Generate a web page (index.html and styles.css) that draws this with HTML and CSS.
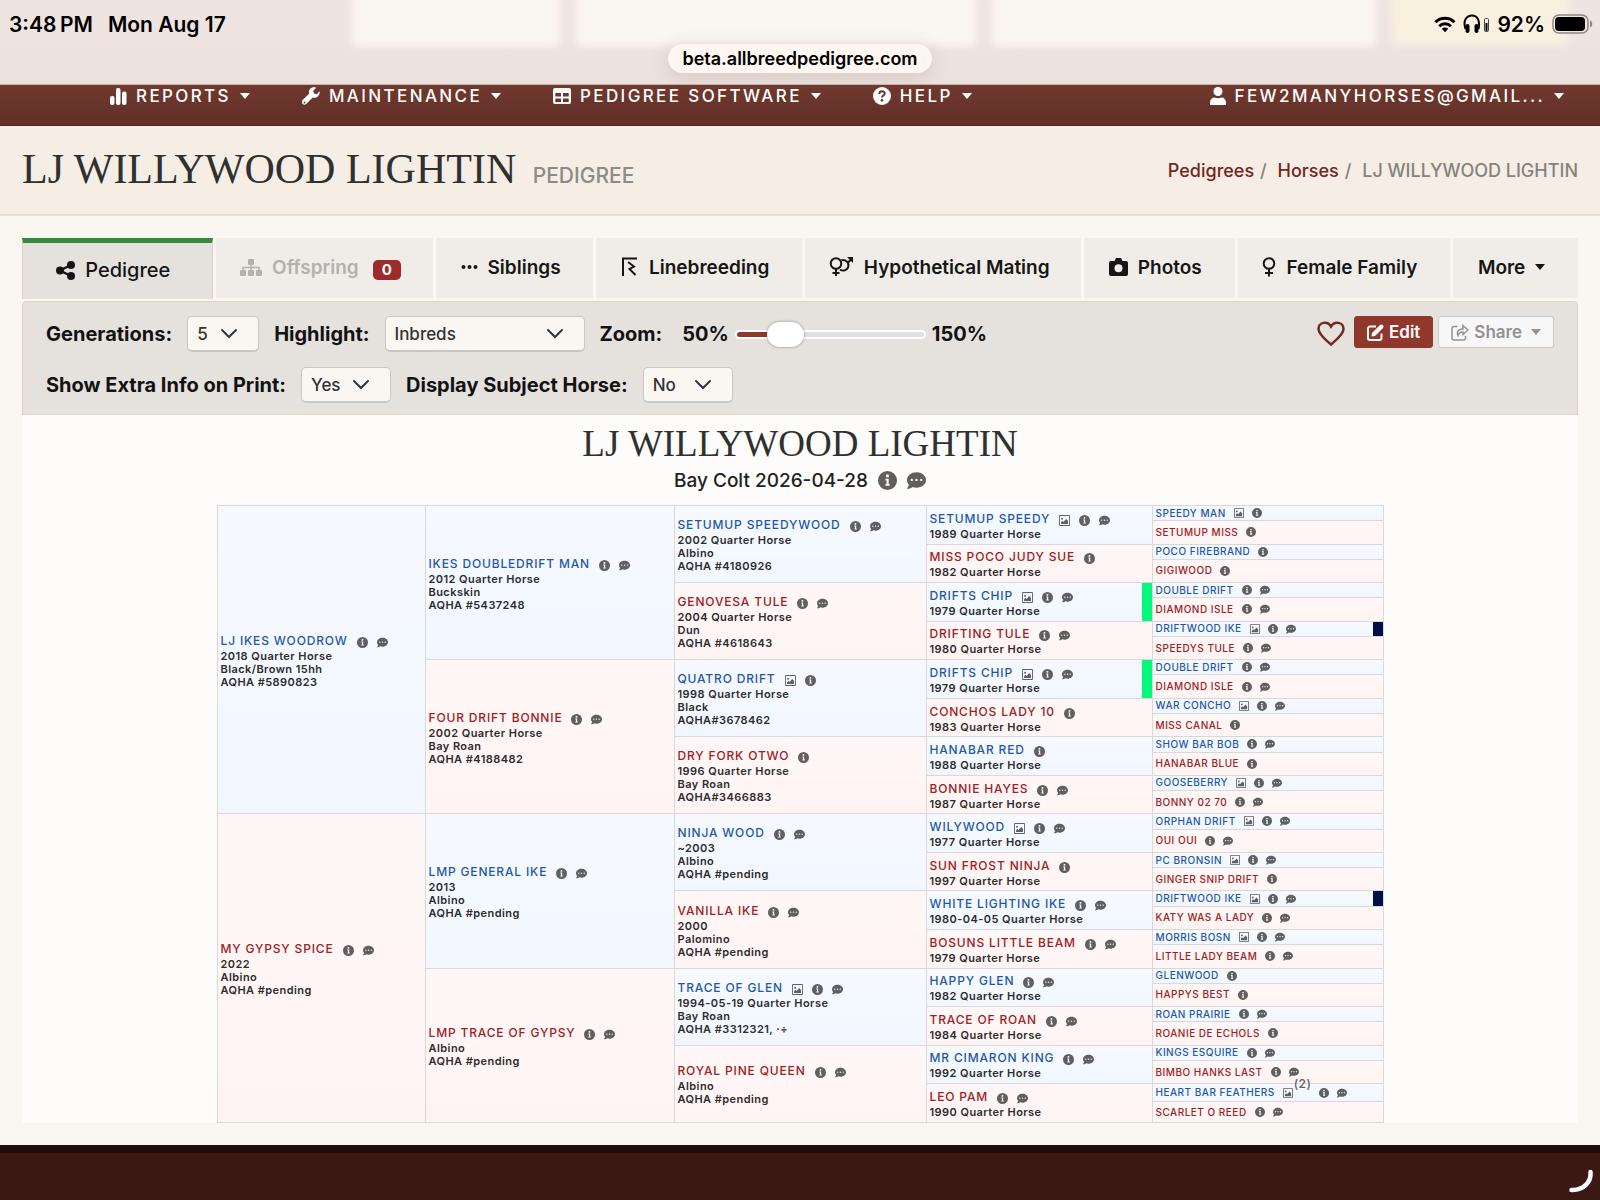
FILE: index.html
```html
<!DOCTYPE html>
<html lang="en">

<head>
    <meta charset="UTF-8">
    <meta name="viewport" content="width=device-width, initial-scale=1.0">
    <title>LJ WILLYWOOD LIGHTIN Pedigree</title>
    <link rel="stylesheet" href="styles.css">
</head>

<body>
    <!-- Shared icons -->
    <svg class="icon-defs" aria-hidden="true">
        <symbol id="info" viewBox="0 0 16 16">
            <path fill-rule="evenodd" d="M8 0a8 8 0 1 1 0 16A8 8 0 0 1 8 0zM6.8 3v2.3h2.3V3zM6.3 6.5v1.4h.9v3h-.9v1.5h3.5v-1.5h-.8V6.500z" />
        </symbol>
        <symbol id="comment" viewBox="0 0 16 16">
            <path fill-rule="evenodd" d="M8 1c4.400 0 8 2.900 8 6.500S12.400 14 8 14c-1.200 0-2.300-.2-3.300-.6C3.700 14.200 2.100 15 .3 15c-.3 0-.4-.4-.2-.6.100-.1 1.200-1.300 1.500-2.800C.6 10.500 0 9.100 0 7.500 0 3.900 3.600 1 8 1zM4 6.500a1 1 0 1 0 0 2 1 1 0 0 0 0-2zm4 0a1 1 0 1 0 0 2 1 1 0 0 0 0-2zm4 0a1 1 0 1 0 0 2 1 1 0 0 0 0-2z" />
        </symbol>
        <symbol id="picture" viewBox="0 0 16 16">
            <path fill-rule="evenodd" d="M1.500 0h13A1.500 1.500 0 0 1 16 1.500v13a1.500 1.500 0 0 1-1.500 1.500h-13A1.500 1.500 0 0 1 0 14.500v-13A1.500 1.500 0 0 1 1.500 0zm-.2 1.300v13.400h13.400V1.300zM4.500 4a1.400 1.400 0 1 1 0 2.800 1.400 1.400 0 0 1 0-2.800zM3 13v-2.500l2-2L6.500 10l4-4.300L13 8.500V13z" />
        </symbol>
        <symbol id="caret" viewBox="0 0 10 6">
            <path d="M0 0h10L5 6z" />
        </symbol>
    </svg>

    <div class="status-bar">
        <div class="blur-box box-one"></div>
        <div class="blur-box box-two"></div>
        <div class="blur-box box-three"></div>
        <div class="blur-box box-four"></div>
        <div class="status-row">
            <span class="time">3:48&#8201;PM</span>
            <span>Mon Aug 17</span>
            <div class="status-icons">
                <svg width="22" height="17" viewBox="0 0 22 17">
                    <g fill="none" stroke="#000" stroke-width="3">
                        <path d="M1.500 6.200a13.500 13.500 0 0 1 19 0" />
                        <path d="M5.200 10.200a8.300 8.300 0 0 1 11.600 0" />
                    </g>
                    <path d="M7.800 12.800a4.500 4.500 0 0 1 6.400 0L11 16.300z" />
                </svg>
                <svg class="headphones" width="27" height="20" viewBox="0 0 27 20">
                    <path d="M2.500 15C-.5 6 4 1.500 9 1.500S17.500 6 15.500 15" fill="none" stroke="#000" stroke-width="2" />
                    <rect x="2.500" y="10" width="4" height="9" rx="2" />
                    <rect x="11.500" y="10" width="4" height="9" rx="2" />
                    <rect x="21.500" y="4.500" width="4" height="13" rx="1" fill="none" stroke="#444" />
                    <rect x="22.500" y="9" width="2" height="8" />
                </svg>
                <span>92%</span>
                <svg class="battery" width="41" height="20" viewBox="0 0 41 20">
                    <rect x="1" y="1" width="35" height="18" rx="6" fill="none" stroke="#8e8583" stroke-width="1.500" />
                    <rect x="3" y="3" width="30" height="14" rx="4" />
                    <path d="M38 6.500c3 1 3 6 0 7z" fill="#8e8583" />
                </svg>
            </div>
        </div>
        <div class="url-pill">beta.allbreedpedigree.com</div>
    </div>

    <nav class="navbar">
        <a href="#">
            <svg width="17" height="17" viewBox="0 0 17 17"><rect y="8" width="4.500" height="9" rx="2" /><rect x="6" width="4.500" height="17" rx="2" /><rect x="12" y="3.500" width="4.500" height="13.500" rx="2" /></svg>
            REPORTS <svg class="caret"><use href="#caret" /></svg>
        </a>
        <a href="#">
            <svg width="18" height="18" viewBox="0 0 18 18"><path fill-rule="evenodd" d="M17.600 4.200l-3 3-2.600-.8-.8-2.600 3-3C12-.1 9.700.3 8.300 1.800 6.900 3.100 6.600 5 7.100 6.700L.7 13.100a2.400 2.400 0 0 0 3.400 3.800l6.700-6.300c1.700.6 3.700.1 5-1.200 1.500-1.300 2.100-3.300 1.800-5.200zM2.500 14.500a1 1 0 1 1 0 2 1 1 0 0 1 0-2z" /></svg>
            MAINTENANCE <svg class="caret"><use href="#caret" /></svg>
        </a>
        <a href="#">
            <svg width="18" height="16" viewBox="0 0 18 16"><path fill-rule="evenodd" d="M2 0h14a2 2 0 0 1 2 2v12a2 2 0 0 1-2 2H2a2 2 0 0 1-2-2V2a2 2 0 0 1 2-2zm.3 5v3.500H8V5zM10 5v3.500h5.700V5zm-7.700 5.500V14H8v-3.500zm7.700 0V14h5.700v-3.500z" /></svg>
            PEDIGREE SOFTWARE <svg class="caret"><use href="#caret" /></svg>
        </a>
        <a href="#">
            <svg width="18" height="18" viewBox="0 0 18 18"><circle cx="9" cy="9" r="9" /><path d="M6.300 7c0-3.700 5.400-3.500 5.400-.5 0 2-2.700 2-2.700 4" fill="none" stroke="#6b352b" stroke-width="2" /><circle cx="9" cy="13.300" r="1.300" fill="#6b352b" /></svg>
            HELP <svg class="caret"><use href="#caret" /></svg>
        </a>
        <a href="#" class="account">
            <svg width="16" height="18" viewBox="0 0 16 18"><circle cx="8" cy="4.500" r="4.500" /><path d="M0 18v-2.500C0 12.500 2 10.500 4.500 10.500c2 1 5 1 7 0 2.500 0 4.500 2 4.500 5V18z" /></svg>
            FEW2MANYHORSES@GMAIL... <svg class="caret"><use href="#caret" /></svg>
        </a>
    </nav>

    <header class="header">
        <h1>LJ WILLYWOOD LIGHTIN <small>PEDIGREE</small></h1>
        <div class="breadcrumb">
            <a href="#">Pedigrees</a><span>/</span>
            <a href="#">Horses</a><span>/</span>
            LJ WILLYWOOD LIGHTIN
        </div>
    </header>

    <main class="content">
        <div class="tabs">
            <a href="#" class="tab active">
                <svg width="19" height="19" viewBox="0 0 19 19"><circle cx="4" cy="9.500" r="4" /><circle cx="15" cy="4" r="4" /><circle cx="15" cy="15" r="4" /><path d="M15 4L4 9.500 15 15" fill="none" stroke="currentColor" stroke-width="2.500" /></svg>
                Pedigree
            </a>
            <a href="#" class="tab disabled">
                <svg width="22" height="17" viewBox="0 0 22 17"><rect x="8" width="6" height="6" rx="1" /><rect y="11" width="6" height="6" rx="1" /><rect x="8" y="11" width="6" height="6" rx="1" /><rect x="16" y="11" width="6" height="6" rx="1" /><path d="M11 5v7M3 12V8.500h16V12" fill="none" stroke="currentColor" stroke-width="1.500" /></svg>
                Offspring <span class="badge">0</span>
            </a>
            <a href="#" class="tab">
                <svg width="17" height="17" viewBox="0 0 17 17"><circle cx="2.500" cy="8" r="2" /><circle cx="8.500" cy="8" r="2" /><circle cx="14.500" cy="8" r="2" /></svg>
                Siblings
            </a>
            <a href="#" class="tab">
                <svg width="18" height="20" viewBox="0 0 18 20"><path d="M2 19V1.500h14M7 5l6 4.500-4.500 2.500L14.500 18" fill="none" stroke="currentColor" stroke-width="2" /></svg>
                Linebreeding
            </a>
            <a href="#" class="tab">
                <svg width="25" height="20" viewBox="0 0 25 20"><g fill="none" stroke="currentColor" stroke-width="2"><circle cx="7" cy="6.500" r="5.300" /><path d="M7 12v7M3.500 16h7M12.500 3.200a5.300 5.300 0 1 1-1.500 9.300M19 5.500l4-4" /></g><path d="M18 0h6v6z" /></svg>
                Hypothetical Mating
            </a>
            <a href="#" class="tab">
                <svg width="19" height="18" viewBox="0 0 19 18"><path fill-rule="evenodd" d="M2 3h3.500L7 0h5l1.500 3H17a2 2 0 0 1 2 2v11a2 2 0 0 1-2 2H2a2 2 0 0 1-2-2V5a2 2 0 0 1 2-2zm7.500 3.300a4 4 0 1 0 0 8 4 4 0 0 0 0-8z" /></svg>
                Photos
            </a>
            <a href="#" class="tab">
                <svg width="14" height="20" viewBox="0 0 14 20"><g fill="none" stroke="currentColor" stroke-width="2"><circle cx="7" cy="6.500" r="5.300" /><path d="M7 12v7.500M3 16h8" /></g></svg>
                Female Family
            </a>
            <a href="#" class="tab">
                More <svg class="caret"><use href="#caret" /></svg>
            </a>
        </div>

        <form class="options">
            <div class="option-row">
                <label for="generations">Generations:</label>
                <select id="generations" class="narrow">
                    <option>5</option>
                </select>
                <label for="highlight">Highlight:</label>
                <select id="highlight" class="wide">
                    <option>Inbreds</option>
                </select>
                <label for="zoom">Zoom:</label>
                <div class="zoom">
                    <span>50%</span>
                    <input type="range" id="zoom" min="50" max="150" value="70">
                    <span>150%</span>
                </div>
                <div class="actions">
                    <button type="button" class="heart-button" aria-label="Favorite">
                        <svg width="28" height="25" viewBox="0 0 28 25"><path d="M14 23.500C9 19 1.500 13.500 1.500 8 1.500 1 10.500-.5 14 5.500 17.500-.5 26.500 1 26.500 8c0 5.500-7.500 11-12.500 15.500z" fill="none" stroke="#74291f" stroke-width="2.500" /></svg>
                    </button>
                    <button type="button" class="edit-button">
                        <svg width="17" height="17" viewBox="0 0 17 17"><path d="M9 2.500H3A2 2 0 0 0 1 4.500V14a2 2 0 0 0 2 2h9.500a2 2 0 0 0 2-2V9.500" fill="none" stroke="currentColor" stroke-width="2" /><path d="M5 9l8-8c1.500-2 5 1.500 3 3l-8 8-3.500.5z" /></svg>
                        Edit
                    </button>
                    <button type="button" class="share-button" disabled>
                        <svg width="18" height="17" viewBox="0 0 18 17"><path d="M6.500 2.500H3a2 2 0 0 0-2 2V14a2 2 0 0 0 2 2h9.500a2 2 0 0 0 2-2v-2M7 11.500C5.500 8 7 5 12 5V1.500l5 4.500-5 4.500V8c-2.500 0-4 .5-5 3.500z" fill="none" stroke="currentColor" stroke-width="1.500" /></svg>
                        Share <svg class="caret"><use href="#caret" /></svg>
                    </button>
                </div>
            </div>
            <div class="option-row">
                <label for="extraInfo">Show Extra Info on Print:</label>
                <select id="extraInfo">
                    <option>Yes</option>
                </select>
                <label for="subjectHorse">Display Subject Horse:</label>
                <select id="subjectHorse">
                    <option>No</option>
                </select>
            </div>
        </form>

        <section class="pedigree">
            <h2>LJ WILLYWOOD LIGHTIN</h2>
            <div class="subject">
                Bay Colt 2026-04-28
                <svg class="icon"><use href="#info" /></svg>
                <svg class="icon"><use href="#comment" /></svg>
            </div>
            <table>
                <colgroup>
                    <col class="gen1">
                    <col class="gen2">
                    <col class="gen3">
                    <col class="gen4">
                    <col class="gen5">
                </colgroup>
                <tbody id="pedigreeBody"></tbody>
            </table>
        </section>
    </main>

    <footer class="footer">
        <svg class="spinner" width="26" height="26" viewBox="0 0 26 26"><path d="M22.500 3c1 10-7 18.500-19 18" fill="none" stroke="#fff" stroke-width="4.500" stroke-linecap="round" /></svg>
    </footer>

    <script src="script.js"></script>
</body>

</html>
```
FILE: styles.css
```css
* {
    margin: 0;
    padding: 0;
    box-sizing: border-box;
}

body {
    font-family: Inter, "Liberation Sans", sans-serif;
    font-size: 19px;
    color: #222;
    background-color: #faf6f1;
    min-height: 100vh;
    display: flex;
    flex-direction: column;
}

a {
    color: inherit;
    text-decoration: none;
}

svg {
    fill: currentColor;
    flex-shrink: 0;
}

.icon-defs {
    position: absolute;
    width: 0;
    height: 0;
}

.caret {
    width: 10px;
    height: 6px;
}

/* Tablet status bar */
.status-bar {
    position: relative;
    height: 85px;
    overflow: hidden;
    background: linear-gradient(#f0e4e1, #ece2dd);
    border-bottom: 1px solid #c4b2ab;
    color: #000;
    font-weight: 600;
}

.blur-box {
    position: absolute;
    top: -20px;
    height: 66px;
    background-color: #faf6f1;
    filter: blur(4px);
}

.box-one {
    left: 22%;
    width: 13%;
}

.box-two {
    left: 36%;
    width: 25%;
}

.box-three {
    left: 62%;
    width: 24%;
}

.box-four {
    left: 87%;
    width: 11%;
    background-color: #faf0df;
}

.status-row {
    position: relative;
    display: flex;
    align-items: center;
    height: 44px;
    padding: 4px 7px 0 9px;
    font-size: 21px;
}

.time {
    margin-right: 15px;
}

.status-icons {
    margin-left: auto;
    display: flex;
    align-items: center;
    gap: 7px;
}

.url-pill {
    position: relative;
    width: max-content;
    margin: 0 auto;
    padding: 0 14px;
    font-size: 18px;
    line-height: 29px;
    border-radius: 15px;
    background-color: #fdf6f1;
    box-shadow: 0 4px 20px rgba(80, 50, 40, 0.15);
}

/* Navigation */
.navbar {
    display: flex;
    gap: 52px;
    height: 41px;
    padding: 0 36px 0 110px;
    background: linear-gradient(#71392e, #5f2f27);
    border-bottom: 1px solid #532820;
    color: #fff;
    font-size: 17px;
    font-weight: 500;
    line-height: 22px;
    letter-spacing: 0.14em;
}

.navbar a {
    display: flex;
    align-items: center;
    gap: 9px;
    height: 22px;
    white-space: nowrap;
}

.account {
    margin-left: auto;
}

/* Page title */
.header {
    display: flex;
    justify-content: space-between;
    align-items: center;
    height: 90px;
    padding: 0 22px;
    background-color: #f6eee4;
    border-bottom: 2px solid #e6ddd3;
}

h1,
h2 {
    font-family: "Liberation Serif", serif;
    font-weight: 400;
    color: #2f3130;
}

h1 {
    padding-top: 4px;
    font-size: 42px;
    line-height: 50px;
}

h1 small {
    margin-left: 6px;
    font-family: Inter, "Liberation Sans", sans-serif;
    font-size: 21px;
    font-weight: 500;
    color: #8d8a87;
}

.breadcrumb {
    font-size: 18px;
    font-weight: 500;
    color: #85827f;
}

.breadcrumb a {
    color: #70281f;
}

.breadcrumb span {
    margin: 0 6px;
}

.content {
    padding: 22px;
}

/* Tabs */
.tabs {
    display: grid;
    grid-template-columns: 191fr 218fr 157fr 207fr 276fr 151fr 213fr 125fr;
    gap: 3px;
    height: 63px;
    padding-bottom: 2px;
}

.tab {
    display: flex;
    justify-content: center;
    align-items: center;
    gap: 10px;
    height: 60px;
    padding: 0 8px 2px 0;
    background-color: #f0ede8;
    color: #161616;
    font-size: 19px;
    font-weight: 600;
    white-space: nowrap;
}

.tab.active {
    height: 61px;
    background-color: #e5e2de;
    border: 1px solid #e2d2c2;
    border-top: 5px solid #38883f;
    border-bottom: 0;
    font-size: 20px;
    font-weight: 500;
}

.tab.disabled {
    color: #b3b1ae;
}

.badge {
    margin: 6px 0 0 4px;
    width: 28px;
    border-radius: 5px;
    background-color: #9c2b2b;
    color: #fff;
    font-size: 15px;
    font-weight: 700;
    line-height: 20px;
    text-align: center;
}

/* Display options */
.options {
    display: flex;
    flex-direction: column;
    gap: 15px;
    padding: 14px 23px 11px;
    background-color: #e5e1dd;
    border: 1px solid #e2d2c2;
    border-radius: 4px 4px 0 0;
}

.option-row {
    display: flex;
    align-items: center;
    gap: 15px;
    height: 36px;
    font-size: 20px;
    font-weight: 700;
    color: #121212;
    white-space: nowrap;
}

select {
    appearance: none;
    width: 90px;
    height: 36px;
    padding: 0 9px;
    border: 1px solid #c9c7c5;
    border-bottom-width: 2px;
    border-radius: 5px;
    background: #faf6f1 url('data:image/svg+xml,<svg xmlns="http://www.w3.org/2000/svg" width="18" height="11" viewBox="0 0 18 11"><path d="M2 2l7 7 7-7" fill="none" stroke="%232f3740" stroke-width="2" stroke-linecap="round"/></svg>') no-repeat right 20px center;
    color: #333;
    font-family: inherit;
    font-size: 17px;
    font-weight: 500;
}

select.narrow {
    width: 72px;
}

select.wide {
    width: 200px;
}

.zoom {
    display: flex;
    align-items: center;
    gap: 6px;
    margin-left: 5px;
}

input[type="range"] {
    appearance: none;
    width: 191px;
    height: 9px;
    border: 2px solid #fff;
    border-radius: 5px;
    background: linear-gradient(to right, #91372c 20%, #e0e0e0 20%);
}

input[type="range"]::-webkit-slider-thumb {
    appearance: none;
    width: 37px;
    height: 25px;
    border-radius: 13px;
    background-color: #fff;
    box-shadow: 0 0 3px rgba(0, 0, 0, 0.4);
}

.actions {
    display: flex;
    align-items: center;
    gap: 5px;
    margin-left: auto;
    padding-bottom: 4px;
}

button {
    display: flex;
    align-items: center;
    gap: 5px;
    height: 32px;
    padding: 0 12px;
    border: 1px solid #8c382d;
    border-radius: 3px;
    font-family: inherit;
    font-size: 17px;
    font-weight: 600;
}

.heart-button {
    padding: 2px 4px 0 0;
    border: 0;
    background: none;
}

.edit-button {
    background-color: #91382d;
    color: #fff;
}

.share-button {
    background-color: #f7f7f7;
    border-color: #cbc9c7;
    color: #929292;
}

.share-button .caret {
    margin-left: 4px;
}

/* Pedigree chart */
.pedigree {
    padding-top: 7px;
    background-color: #fdfcfa;
}

h2 {
    font-size: 37px;
    line-height: 44px;
    text-align: center;
}

.subject {
    display: flex;
    justify-content: center;
    align-items: center;
    gap: 10px;
    height: 28px;
    margin-bottom: 11px;
    font-weight: 500;
}

.icon {
    width: 11px;
    height: 11px;
    color: #606060;
}

.subject .icon {
    width: 19px;
    height: 19px;
}

table {
    width: 75%;
    height: 618px;
    margin: 0 auto;
    table-layout: fixed;
    border-collapse: collapse;
}

.gen1 {
    width: 208px;
}

.gen2 {
    width: 249px;
}

.gen3 {
    width: 252px;
}

.gen4 {
    width: 226px;
}

.gen5 {
    width: 231px;
}

tr:nth-child(odd) {
    height: 15px;
}

tr:nth-child(even) {
    height: 23px;
}

tr:nth-child(31) {
    height: 18px;
}

tr:nth-child(32) {
    height: 20px;
}

td {
    padding: 2px 3px 0;
    border: 1px solid #d9d9d9;
    vertical-align: middle;
    font-size: 11px;
    font-weight: 600;
    line-height: 13px;
    letter-spacing: 0.04em;
    color: #2d2d2d;
    white-space: nowrap;
}

td.sire {
    background: linear-gradient(#f6faff, #f2f6ff);
}

td.dam {
    background: linear-gradient(#fff7f7, #fff4f3);
}

td.small {
    padding-top: 0;
}

.name {
    display: flex;
    align-items: center;
    gap: 9px;
    margin-bottom: 1px;
    font-size: 12px;
    font-weight: 500;
    line-height: 16px;
    letter-spacing: 0.07em;
}

.sire .name {
    color: #1f58a5;
}

.dam .name {
    color: #a02024;
}

.name .icon {
    margin-top: 3px;
}

.small .name {
    gap: 8px;
    margin-bottom: 0;
    font-size: 10px;
    line-height: 13px;
    letter-spacing: 0.05em;
}

.small .icon {
    width: 10px;
    height: 10px;
    margin-top: 0;
}

/* Inbred markers */
td.green {
    box-shadow: inset -10px 0 #00f97a;
}

td.navy {
    box-shadow: inset -10px 0 #001045;
}

.pictures {
    position: relative;
    display: flex;
    margin-right: 18px;
}

.pictures sup {
    position: absolute;
    left: 11px;
    top: -11px;
    font-size: 12px;
    color: #606060;
}

/* Footer */
.footer {
    flex-grow: 1;
    display: flex;
    justify-content: flex-end;
    padding: 16px 6px 6px 0;
    background-color: #3a1814;
    border-top: 8px solid #220c0c;
}
```
FILE: script.js
```js
// Each entry: name, icons (p = picture, i = info, c = comments), detail lines, marker
const generations = [
    [
        ["LJ IKES WOODROW", "ic", ["2018 Quarter Horse", "Black/Brown 15hh", "AQHA #5890823"]],
        ["MY GYPSY SPICE", "ic", ["2022", "Albino", "AQHA #pending"]]
    ],
    [
        ["IKES DOUBLEDRIFT MAN", "ic", ["2012 Quarter Horse", "Buckskin", "AQHA #5437248"]],
        ["FOUR DRIFT BONNIE", "ic", ["2002 Quarter Horse", "Bay Roan", "AQHA #4188482"]],
        ["LMP GENERAL IKE", "ic", ["2013", "Albino", "AQHA #pending"]],
        ["LMP TRACE OF GYPSY", "ic", ["Albino", "AQHA #pending"]]
    ],
    [
        ["SETUMUP SPEEDYWOOD", "ic", ["2002 Quarter Horse", "Albino", "AQHA #4180926"]],
        ["GENOVESA TULE", "ic", ["2004 Quarter Horse", "Dun", "AQHA #4618643"]],
        ["QUATRO DRIFT", "pi", ["1998 Quarter Horse", "Black", "AQHA#3678462"]],
        ["DRY FORK OTWO", "i", ["1996 Quarter Horse", "Bay Roan", "AQHA#3466883"]],
        ["NINJA WOOD", "ic", ["~2003", "Albino", "AQHA #pending"]],
        ["VANILLA IKE", "ic", ["2000", "Palomino", "AQHA #pending"]],
        ["TRACE OF GLEN", "pic", ["1994-05-19 Quarter Horse", "Bay Roan", "AQHA #3312321, ·÷"]],
        ["ROYAL PINE QUEEN", "ic", ["Albino", "AQHA #pending"]]
    ],
    [
        ["SETUMUP SPEEDY", "pic", ["1989 Quarter Horse"]],
        ["MISS POCO JUDY SUE", "i", ["1982 Quarter Horse"]],
        ["DRIFTS CHIP", "pic", ["1979 Quarter Horse"], "green"],
        ["DRIFTING TULE", "ic", ["1980 Quarter Horse"]],
        ["DRIFTS CHIP", "pic", ["1979 Quarter Horse"], "green"],
        ["CONCHOS LADY 10", "i", ["1983 Quarter Horse"]],
        ["HANABAR RED", "i", ["1988 Quarter Horse"]],
        ["BONNIE HAYES", "ic", ["1987 Quarter Horse"]],
        ["WILYWOOD", "pic", ["1977 Quarter Horse"]],
        ["SUN FROST NINJA", "i", ["1997 Quarter Horse"]],
        ["WHITE LIGHTING IKE", "ic", ["1980-04-05 Quarter Horse"]],
        ["BOSUNS LITTLE BEAM", "ic", ["1979 Quarter Horse"]],
        ["HAPPY GLEN", "ic", ["1982 Quarter Horse"]],
        ["TRACE OF ROAN", "ic", ["1984 Quarter Horse"]],
        ["MR CIMARON KING", "ic", ["1992 Quarter Horse"]],
        ["LEO PAM", "ic", ["1990 Quarter Horse"]]
    ],
    [
        ["SPEEDY MAN", "pi"], ["SETUMUP MISS", "i"],
        ["POCO FIREBRAND", "i"], ["GIGIWOOD", "i"],
        ["DOUBLE DRIFT", "ic"], ["DIAMOND ISLE", "ic"],
        ["DRIFTWOOD IKE", "pic", [], "navy"], ["SPEEDYS TULE", "ic"],
        ["DOUBLE DRIFT", "ic"], ["DIAMOND ISLE", "ic"],
        ["WAR CONCHO", "pic"], ["MISS CANAL", "i"],
        ["SHOW BAR BOB", "ic"], ["HANABAR BLUE", "i"],
        ["GOOSEBERRY", "pic"], ["BONNY 02 70", "ic"],
        ["ORPHAN DRIFT", "pic"], ["OUI OUI", "ic"],
        ["PC BRONSIN", "pic"], ["GINGER SNIP DRIFT", "i"],
        ["DRIFTWOOD IKE", "pic", [], "navy"], ["KATY WAS A LADY", "ic"],
        ["MORRIS BOSN", "pic"], ["LITTLE LADY BEAM", "ic"],
        ["GLENWOOD", "i"], ["HAPPYS BEST", "i"],
        ["ROAN PRAIRIE", "ic"], ["ROANIE DE ECHOLS", "i"],
        ["KINGS ESQUIRE", "ic"], ["BIMBO HANKS LAST", "ic"],
        ["HEART BAR FEATHERS", "2ic"], ["SCARLET O REED", "ic"]
    ]
];

const icons = {
    p: '<svg class="icon"><use href="#picture" /></svg>',
    i: '<svg class="icon"><use href="#info" /></svg>',
    c: '<svg class="icon"><use href="#comment" /></svg>',
    2: '<span class="pictures"><svg class="icon"><use href="#picture" /></svg><sup>(2)</sup></span>'
};

function createCell(horse, index, generation) {
    const [name, iconKeys, details = [], marker = ""] = horse;
    const cell = document.createElement("td");
    cell.rowSpan = 32 / Math.pow(2, generation + 1);
    cell.className = `${index % 2 ? "dam" : "sire"} ${generation === 4 ? "small" : ""} ${marker}`;
    cell.innerHTML = `
        <div class="name"><a href="#">${name}</a>${[...iconKeys].map(key => icons[key]).join("")}</div>
        ${details.map(line => `<div>${line}</div>`).join("")}
    `;
    return cell;
}

const body = document.getElementById("pedigreeBody");

for (let row = 0; row < 32; row++) {
    const tr = document.createElement("tr");
    generations.forEach(function (horses, generation) {
        const span = 32 / horses.length;
        if (row % span === 0) {
            tr.appendChild(createCell(horses[row / span], row / span, generation));
        }
    });
    body.appendChild(tr);
}
```
